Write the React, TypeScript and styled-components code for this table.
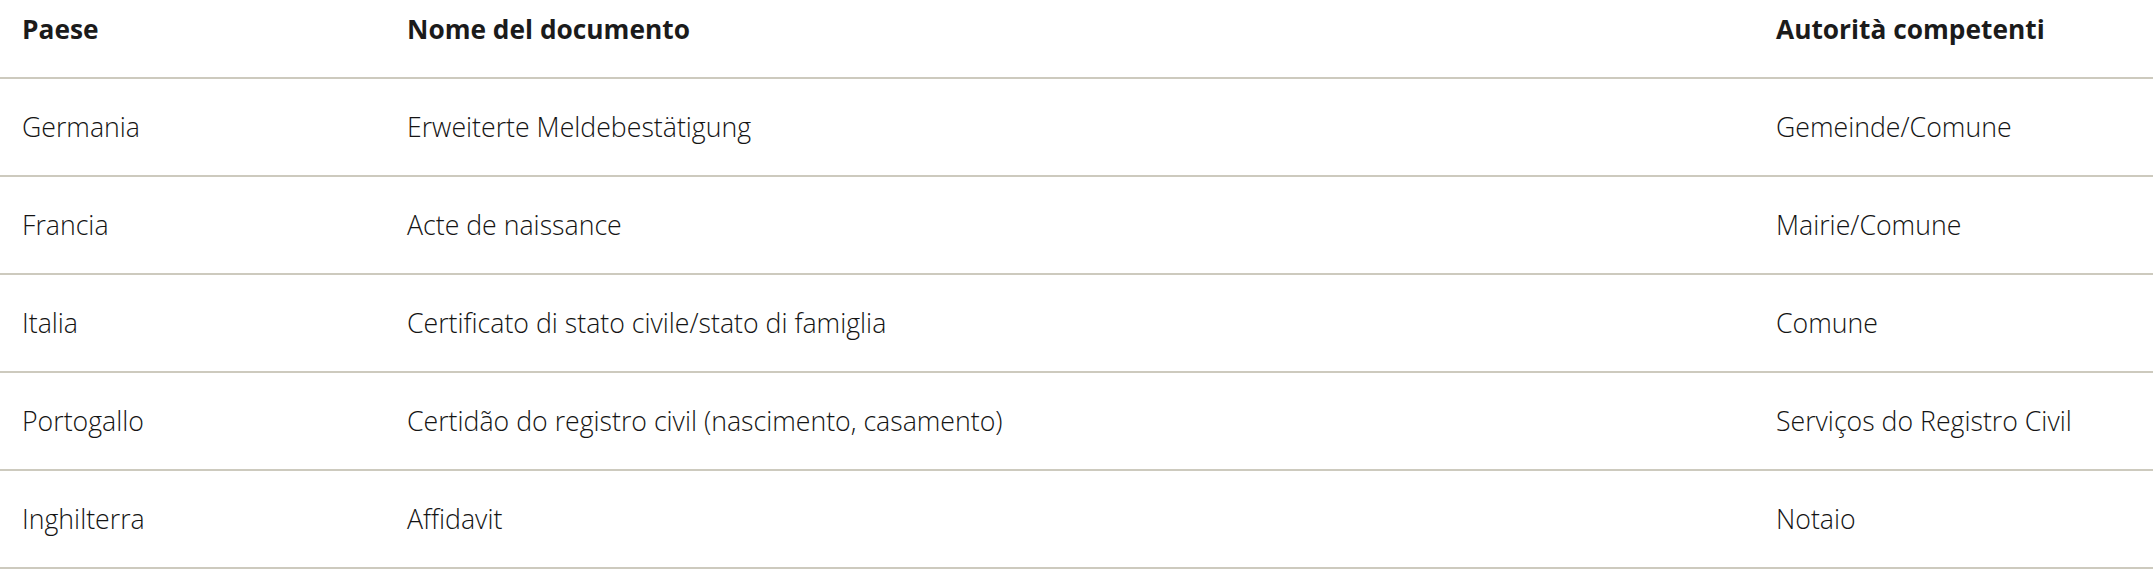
import React from "react"
import styled, { createGlobalStyle } from "styled-components"

const GlobalStyle = createGlobalStyle`
  body {
    margin: 0;
    background: #fff;
    font-family: "Open Sans", "Liberation Sans", sans-serif;
    color: #1b1b1b;
  }
`

const rows = [
  { country: "Germania", doc: "Erweiterte Meldebestätigung", authority: "Gemeinde/Comune" },
  { country: "Francia", doc: "Acte de naissance", authority: "Mairie/Comune" },
  { country: "Italia", doc: "Certificato di stato civile/stato di famiglia", authority: "Comune" },
  { country: "Portogallo", doc: "Certidão do registro civil (nascimento, casamento)", authority: "Serviços do Registro Civil" },
  { country: "Inghilterra", doc: "Affidavit", authority: "Notaio" },
]

const Table = styled.table`
  width: 100%;
  border-collapse: collapse;
  table-layout: fixed;
`

const HeadCell = styled.th`
  text-align: left;
  font-weight: 700;
  font-size: 26.3px;
  line-height: 39px;
  padding: 10px 22px 28px;
  border-bottom: 2px solid #cdcabe;
`

const Cell = styled.td`
  font-weight: 300;
  font-size: 26.7px;
  line-height: 39px;
  padding: 28px 22px 29px;
  border-bottom: 2px solid #cdcabe;
  vertical-align: top;
  color: #141414;
`

export default function App() {
  return (
    <>
      <GlobalStyle />
      <Table>
        <colgroup>
          <col style={{ width: 385 }} />
          <col style={{ width: 1369 }} />
          <col />
        </colgroup>
        <thead>
          <tr>
            <HeadCell>Paese</HeadCell>
            <HeadCell>Nome del documento</HeadCell>
            <HeadCell>Autorità competenti</HeadCell>
          </tr>
        </thead>
        <tbody>
          {rows.map((r) => (
            <tr key={r.country}>
              <Cell>{r.country}</Cell>
              <Cell>{r.doc}</Cell>
              <Cell>{r.authority}</Cell>
            </tr>
          ))}
        </tbody>
      </Table>
    </>
  )
}
